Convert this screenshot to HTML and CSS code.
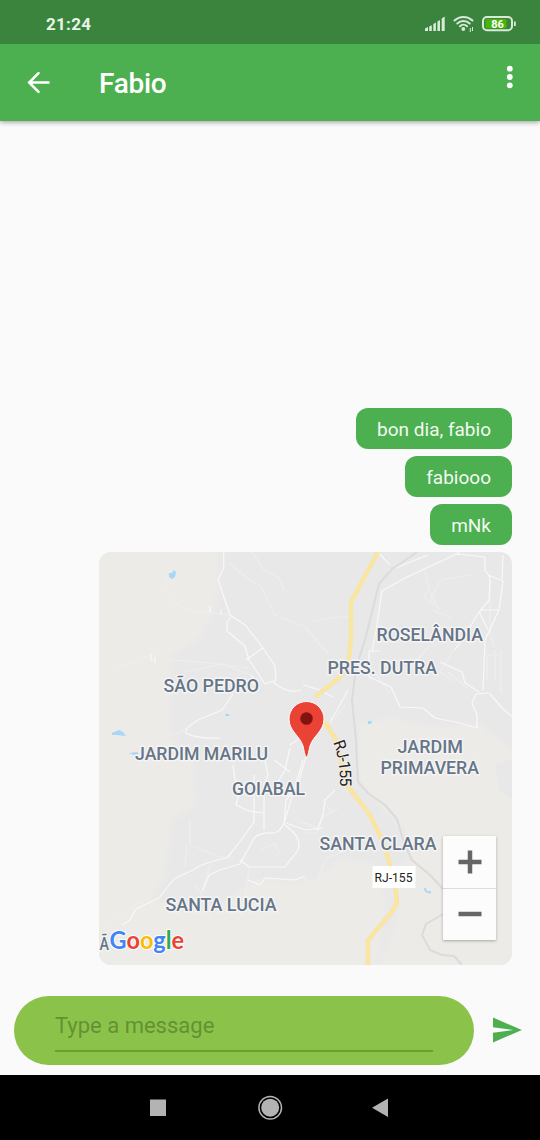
FILE: index.html
```html
<!DOCTYPE html>
<html lang="en">
<head>
<meta charset="utf-8">
<title>Fabio</title>
<link rel="stylesheet" href="styles.css">
</head>
<body>
<div class="screen">
  <div class="status">
    <span class="clock">21:24</span>
    <svg class="status-icons" width="96" height="24" viewBox="422 12 96 24">
      <g fill="#d9ead9">
        <path d="M425 28.500l3-1.500v4h-3zM429.200 26.500l2.600-1.300v5.800h-2.600zM433.300 24l2.600-1.500v8.500h-2.600zM437.400 21.500l2.600-1.500v11h-2.600zM441.700 18.500l3-2v14.500h-3z"/>
        <circle cx="463.300" cy="29" r="1.900"/>
        <path d="M469.800 28h1v4h-1zM472 27h1v4h-1z"/>
      </g>
      <g fill="none" stroke="#d9ead9" stroke-width="2" stroke-linecap="round">
        <path d="M454.500 20.500a13 13 0 0 1 18 0M457.300 23.500a9 9 0 0 1 12.400 0M460 26.200a5 5 0 0 1 7 0"/>
        <rect x="483" y="17" width="29" height="13.300" rx="4"/>
      </g>
      <rect x="485.500" y="19" width="21" height="9.300" rx="1.500" fill="#49b50a"/>
      <path d="M514 21.500h1.800v4.500h-1.800z" fill="#d9ead9"/>
      <text class="battery-text" x="497.500" y="27.800" text-anchor="middle">86</text>
    </svg>
  </div>
  <header class="appbar">
    <svg class="back" width="24" height="24" viewBox="0 0 24 24"><path d="M21.500 11.500H3M11.500 2.200L2.200 11.500L11.500 20.800" fill="none" stroke="#fff" stroke-width="2.600" stroke-linecap="round"/></svg>
    <h1 class="title">Fabio</h1>
    <svg class="more" width="8" height="24" viewBox="0 0 8 24" fill="#fff"><circle cx="3.800" cy="3.700" r="2.900"/><circle cx="3.800" cy="12" r="2.900"/><circle cx="3.800" cy="20.300" r="2.900"/></svg>
  </header>
  <main class="chat">
    <div class="bubble">bon dia, fabio</div>
    <div class="bubble">fabiooo</div>
    <div class="bubble">mNk</div>
    <div class="map">
      <svg width="413" height="413" viewBox="99 552 413 413">
        <defs><filter id="soft" x="-10%" y="-10%" width="120%" height="120%"><feGaussianBlur stdDeviation="3"/></filter></defs>
        <rect x="99" y="552" width="413" height="413" fill="#e8e8e8"/>
        <g fill="#ecebe8" filter="url(#soft)">
          <path d="M90 540H221L216 600Q212 630 190 645L172 655L170 735L195 765L196 805L172 820L165 878L150 900L215 908L255 880L312 883L340 858L380 866L386 905L375 980H90Z"/>
          <path d="M358 725L390 718L430 726L480 724L520 755V980H375L398 912L390 868L410 860L402 828L378 803L358 780Z"/>
        </g>
        <path d="M495 765L515 758V800L500 792Z" fill="#e8e8e9"/>
        <g class="minor">
          <path d="M230 563q18 18 30 22l15 30 30 12 24 28M252 552l12 18 15 8 5 12M167 580q0 25 26 31l38 4M113 668l14-3 20-9 8 5M171 660l40 3 38 5M184 672l38-8 30 12M310 622l25-5 15 0M171 735l15-6M190 820v25l30 12h14M187 845l-2 22M195 885l15 20v18M210 865l-9 30M249 870l-7 45M260 850l15-6 5 10M430 585l-6 12 16 12M471 575l-30 5-11 20M433 610l18 8M425 570l4 20 8 15M345 705l-15 20-25 0M105 925l20-12 20-14M320 830l-12-6-10-2M322 800l10 13M338 808l-15 9-6 15-13 2M316 883l10-24 20-9M302 878l12 5"/>
          <path d="M374 671l15 22M430 645l-22 26M455 648l-15 24M448 672l19 16M490 580v55l5 13M495 650v30M501 650v43M501 655h-14v25M440 672l15 10"/>
        </g>
        <g class="road">
          <path d="M223.700 552V568L218 580L230 615L245 625L263 648L275 666L276 680L265 684L249 660L245 646L227 631L227 622L231 617M246 660L263 648M252 675L254 685M273 682Q289 695 301 690M233 694L222 710L198 720Q184 728 186 733Q196 739 221 738"/>
          <path d="M210 612v-6M221 615v-5M151 653v8M155 655v8"/>
          <path d="M233 765L235 780L241 786L236 805L249 811L263 813M254 775L254 822Q240 842 227 858Q202 863 195 869L174 879L159 898L136 909L130 920L122 925M265 760L268 775L264 785V830M290 748L285 770L276 785M303 760L285 820Q281 832 274 833Q255 832 252 842L240 864L220 870L209 875L203 890M306 757L297 787L286 800L284 825M285 825Q303 838 298 850L285 867H249L240 860M274 760L290 772M290 745L300 738M286 823L305 830"/>
          <path d="M303 685L320 690L333 697M378 552L390 565M382 591L378 618L377 625L372 652M382 591L405 578L448 558L460 552M388 571L428 555M456 554L485 557V570L490 578L489 600L480 611L455 650M502 579L503 555M488 575L503 581L499 610H480M499 610L485 640L483 690M479 611L488 630M380 651H369V677L391 687L400 707L423 708L435 718L460 723L477 728L477 715L472 703L476 694L488 693M489 693L505 711L512 716M479 692L465 683L462 672L440 662M348 690L337 710L330 722"/>
          <path d="M305 830L323 828M305 876L295 880L265 878L260 885L248 880"/>
          <path d="M335 790L325 800L323 815L317 830"/>
        </g>
        <path class="rail" d="M417 552L391 570L379 584L365 640L356 668L352 700L356 740L358 782L369 794L385 805L397 819L404 843L412 860L430 875L443 889M443 914L426 924L422 935L430 950L442 955L454 956L462 965"/>
        <path class="highway-edge" d="M378 552L351 602L351 640L348 667L339 678L315 697M306 712L326 724L336 740L347 785L370 815L382 840L395 880L397 903L391 913L368 940V966"/>
        <path class="highway" d="M378 552L351 602L351 640L348 667L339 678L315 697M306 712L326 724L336 740L347 785L370 815L382 840L395 880L397 903L391 913L368 940V966"/>
        <g fill="#a6d7f7">
          <path d="M169 573l3 0 2-3 2 2-1 5-3 2-3-2zM112 733l7-3 4 2 3 4-9-1-5 0zM129 753l8-1 2 2-5 1zM225 714h4v2l-3 0zM368 721l4 0-1 3-3 0z"/>
        </g>
        <path d="M425 888q0 5 6 4" fill="none" stroke="#a6d7f7" stroke-width="2"/>
        <g class="place">
          <text x="163.500" y="692" textLength="95.500" lengthAdjust="spacingAndGlyphs">SÃO PEDRO</text>
          <text x="135" y="760" textLength="133" lengthAdjust="spacingAndGlyphs">JARDIM MARILU</text>
          <text x="232" y="795" textLength="73" lengthAdjust="spacingAndGlyphs">GOIABAL</text>
          <text x="376.500" y="640.500" textLength="106.500" lengthAdjust="spacingAndGlyphs">ROSELÂNDIA</text>
          <text x="327.500" y="674" textLength="109.500" lengthAdjust="spacingAndGlyphs">PRES. DUTRA</text>
          <text x="397.500" y="753" textLength="65.500" lengthAdjust="spacingAndGlyphs">JARDIM</text>
          <text x="380.500" y="774" textLength="98.500" lengthAdjust="spacingAndGlyphs">PRIMAVERA</text>
          <text x="319.500" y="850" textLength="117" lengthAdjust="spacingAndGlyphs">SANTA CLARA</text>
          <text x="165.500" y="910.500" textLength="111" lengthAdjust="spacingAndGlyphs">SANTA LUCIA</text>
          <text x="99.500" y="950" textLength="9.500" lengthAdjust="spacingAndGlyphs">Ã</text>
        </g>
        <path id="roadname" d="M333 742.500Q341 761 340 790" fill="none"/>
        <text class="roadname"><textPath href="#roadname" textLength="45">RJ-155</textPath></text>
        <rect x="372.500" y="866" width="43" height="22" fill="#fff"/>
        <text class="shield" x="374.500" y="882" textLength="38" lengthAdjust="spacingAndGlyphs">RJ-155</text>
        <path d="M306.500 757C305 757 304.700 753 303 746C300 736 289 731 289 719A17.500 17.500 0 0 1 324 719C324 731 313 736 310 746C308.300 753 308 757 306.500 757Z" fill="#ea4335" stroke="#fff" stroke-width="1"/>
        <circle cx="306.500" cy="718.500" r="6.300" fill="#811411"/>
        <text class="logo" x="109.500" y="949" textLength="74.500" lengthAdjust="spacingAndGlyphs"><tspan fill="#4285f4">G</tspan><tspan fill="#ea4335">o</tspan><tspan fill="#fbbc05">o</tspan><tspan fill="#4285f4">g</tspan><tspan fill="#34a853">l</tspan><tspan fill="#ea4335">e</tspan></text>
      </svg>
      <div class="zoom">
        <div class="zoom-key"><svg width="24" height="24" viewBox="0 0 24 24"><path d="M12 .5v23M.5 12h23" stroke="#666" stroke-width="4.500"/></svg></div>
        <div class="zoom-key"><svg width="24" height="24" viewBox="0 0 24 24"><path d="M.5 12h23" stroke="#666" stroke-width="4.500"/></svg></div>
      </div>
    </div>
  </main>
  <footer class="composer">
    <div class="pill"><div class="field">Type a message</div></div>
    <svg class="send" width="29" height="26" viewBox="0 0 29 26"><path d="M0 .5L28.800 13L0 25.500V15.700L20.500 13L0 10.300Z" fill="#4caf50"/></svg>
  </footer>
  <nav class="nav">
    <svg width="540" height="65" viewBox="0 1075 540 65" fill="#b3b3b3"><rect x="150" y="1099.500" width="16" height="16.500"/><circle cx="270.200" cy="1107.700" r="9"/><circle cx="270.200" cy="1107.700" r="11.300" fill="none" stroke="#b3b3b3" stroke-width="1.500"/><path d="M372 1107.700L388 1098.500V1117Z"/></svg>
  </nav>
</div>
</body>
</html>
```
FILE: styles.css
```css
* { box-sizing: border-box; }
body { margin: 0; font-family: Roboto, sans-serif; }
.screen { width: 540px; height: 1140px; display: flex; flex-direction: column; background: #fafafa; overflow: hidden; }
.status { position: relative; z-index: 1; height: 44px; flex: none; background: #3b843e; display: flex; justify-content: space-between; align-items: flex-start; padding: 12px 22px 0 46px; }
.clock { color: #e9f4e9; font-size: 17px; font-weight: 700; line-height: 24px; letter-spacing: .3px; }
.battery-text { font-size: 11px; font-weight: 700; fill: #fff; }
.appbar { height: 77px; flex: none; background: #4caf50; display: flex; padding: 0 26px 0 27px; box-shadow: 0 1px 5px rgba(0,0,0,.4); }
.back { margin-top: 27px; }
.title { margin: 22px 0 0 48px; font-size: 28px; font-weight: 500; line-height: 35px; letter-spacing: -.3px; color: #fff; flex: 1; }
.more { margin-top: 21px; }
.chat { flex: 1; min-height: 0; display: flex; flex-direction: column; justify-content: flex-end; align-items: flex-end; padding: 0 28px 31px 0; }
.bubble { height: 41px; line-height: 43px; margin-bottom: 7px; padding: 0 21px; border-radius: 12px; background: #4caf50; color: #f3faf3; font-size: 19px; }
.map { position: relative; width: 413px; height: 413px; flex: none; border-radius: 12px; overflow: hidden; }
.map svg { display: block; }
.minor { fill: none; stroke: #eeeeee; stroke-width: 1.2; stroke-linejoin: round; }
.road { fill: none; stroke: #f8f8f8; stroke-width: 1.2; stroke-linejoin: round; }
.rail { fill: none; stroke: #dadbdc; stroke-width: 2; stroke-linejoin: round; }
.highway-edge { fill: none; stroke: #f2e3b4; stroke-width: 4.6; stroke-linejoin: round; }
.highway { fill: none; stroke: #fbe69c; stroke-width: 3; stroke-linejoin: round; }
.place text { font-size: 18.5px; font-weight: 500; fill: #667587; stroke: #f5f5f5; stroke-width: 3px; paint-order: stroke; stroke-linejoin: round; }
.roadname { font-size: 16px; fill: #222; stroke: #f0f0f0; stroke-width: 2px; paint-order: stroke; }
.shield { font-size: 13px; fill: #222; }
.logo { font-family: Lato, sans-serif; font-size: 25px; font-weight: 700; stroke: #fff; stroke-width: 2px; paint-order: stroke; }
.zoom { position: absolute; right: 16px; bottom: 25px; width: 53px; height: 104px; display: flex; flex-direction: column; background: rgba(255,255,255,.85); box-shadow: 0 1px 3px rgba(0,0,0,.3); border-radius: 1px; }
.zoom-key { flex: 1; display: flex; align-items: center; justify-content: center; }
.zoom-key + .zoom-key { border-top: 1px solid #dcdcdc; }
.composer { height: 79px; flex: none; display: flex; align-items: flex-start; padding: 0 18px 0 14px; }
.pill { width: 460px; height: 69px; border-radius: 35px; background: #8bc34a; padding: 12px 41px 0; }
.field { height: 44px; border-bottom: 2px solid #689f2f; color: #649133; font-size: 22px; line-height: 35px; }
.send { margin: 21px 0 0 19px; }
.nav { height: 65px; flex: none; background: #000; }
.nav svg { display: block; }
```
